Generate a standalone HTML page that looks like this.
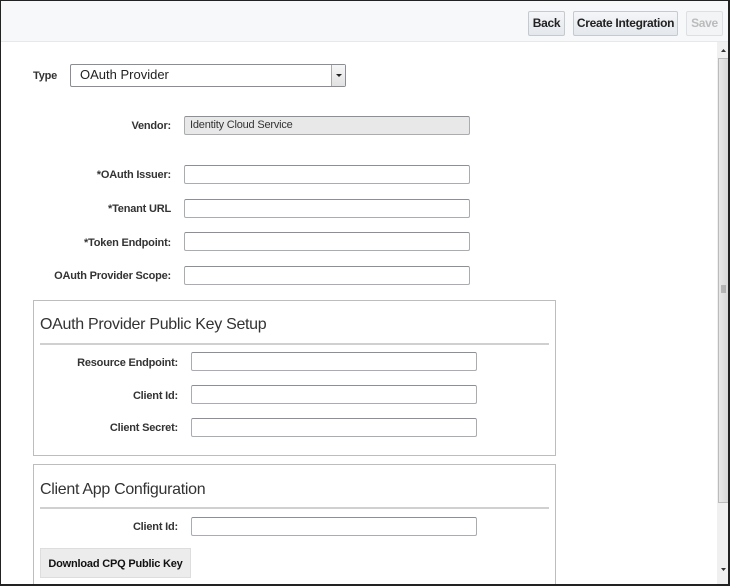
<!DOCTYPE html>
<html><head><meta charset="utf-8"><style>
*{box-sizing:border-box;margin:0;padding:0}
body{width:730px;height:586px;overflow:hidden;background:#fff;font-family:"Liberation Sans",Arial,sans-serif;position:relative}
.frame{position:absolute;left:0;top:0;width:730px;height:586px;border:1px solid #222;border-right:2px solid #222;border-bottom:2px solid #222;pointer-events:none;z-index:10}
.hdr{position:absolute;left:0;top:0;width:730px;height:42px;background:#f7f8f9;border-bottom:1px solid #e6e8ea}
.btn{position:absolute;height:25px;border:1px solid #c4cad0;border-radius:2px;background:linear-gradient(#f4f6f8,#e4e8ec);font-size:12px;font-weight:bold;color:#222;text-align:center;line-height:23px;letter-spacing:-0.3px}
.lbl{position:absolute;font-size:11px;font-weight:bold;color:#333;text-align:right;line-height:18px;letter-spacing:-0.2px}
.in{position:absolute;height:19px;border:1px solid #a9adb2;border-top-color:#8c9096;border-radius:2px;background:#fff}
.box{position:absolute;left:33px;width:523px;border:1px solid #bdbdbd}
.ttl{position:absolute;left:6px;font-size:16px;color:#333;letter-spacing:-0.3px}
.line{position:absolute;left:6px;right:6px;height:2px;background:#d0d0d0}
</style></head><body>
<div class="hdr"></div>
<div class="btn" style="left:528px;top:11px;width:37px">Back</div>
<div class="btn" style="left:573px;top:11px;width:105px">Create Integration</div>
<div class="btn" style="left:686px;top:11px;width:37px;color:#bbb;border-color:#dde0e3;background:#f2f4f6">Save</div>

<div class="lbl" style="left:33px;top:67px;text-align:left">Type</div>
<div class="in" style="left:70px;top:64px;width:276px;height:23px;border-color:#8a8e94"></div>
<div style="position:absolute;left:80px;top:67px;font-size:13px;color:#222">OAuth Provider</div>
<div style="position:absolute;left:331px;top:65px;width:14px;height:21px;border-left:1px solid #aaa;background:linear-gradient(#f6f6f6,#e2e2e2)"><svg width="14" height="21"><path d="M4 9h6l-3 3z" fill="#222"/></svg></div>

<div class="lbl" style="left:0;width:171px;top:117px">Vendor:</div>
<div class="in" style="left:184px;top:116px;width:286px;background:#e8e8e8"></div>
<div style="position:absolute;left:190px;top:119px;font-size:11px;color:#333;letter-spacing:-0.2px">Identity Cloud Service</div>

<div class="lbl" style="left:0;width:171px;top:166px">*OAuth Issuer:</div>
<div class="in" style="left:184px;top:165px;width:286px"></div>
<div class="lbl" style="left:0;width:171px;top:200px">*Tenant URL</div>
<div class="in" style="left:184px;top:199px;width:286px"></div>
<div class="lbl" style="left:0;width:171px;top:234px">*Token Endpoint:</div>
<div class="in" style="left:184px;top:232px;width:286px"></div>
<div class="lbl" style="left:0;width:171px;top:267px">OAuth Provider Scope:</div>
<div class="in" style="left:184px;top:266px;width:286px"></div>

<div class="box" style="top:300px;height:156px">
<div class="ttl" style="top:15px">OAuth Provider Public Key Setup</div>
<div class="line" style="top:42px"></div>
</div>
<div class="lbl" style="left:0;width:178px;top:354px">Resource Endpoint:</div>
<div class="in" style="left:191px;top:352px;width:286px"></div>
<div class="lbl" style="left:0;width:178px;top:387px">Client Id:</div>
<div class="in" style="left:191px;top:385px;width:286px"></div>
<div class="lbl" style="left:0;width:178px;top:419px">Client Secret:</div>
<div class="in" style="left:191px;top:418px;width:286px"></div>

<div class="box" style="top:464px;height:122px">
<div class="ttl" style="top:16px">Client App Configuration</div>
<div class="line" style="top:42px"></div>
</div>
<div class="lbl" style="left:0;width:178px;top:518px">Client Id:</div>
<div class="in" style="left:191px;top:517px;width:286px"></div>
<div style="position:absolute;left:40px;top:548px;width:151px;height:30px;background:#ececec;border:1px solid #ddd;font-size:11px;font-weight:bold;color:#111;text-align:center;line-height:30px;letter-spacing:-0.2px">Download CPQ Public Key</div>

<div style="position:absolute;left:717px;top:42px;width:13px;height:544px;background:#f0f0f0"></div>
<div style="position:absolute;left:718px;top:58px;width:11px;height:445px;background:linear-gradient(90deg,#e8e8e8,#d8d8d8);border:1px solid #bbb"></div>
<svg style="position:absolute;left:718px;top:44px" width="11" height="542">
<path d="M3 8h5l-2.5-3z" fill="#333"/>
<path d="M3 242h5M3 244h5M3 246h5M3 248h5" stroke="#888" stroke-width="1"/>
<path d="M3 524h5l-2.5 3z" fill="#333"/>
</svg>
<div class="frame"></div>
</body></html>
